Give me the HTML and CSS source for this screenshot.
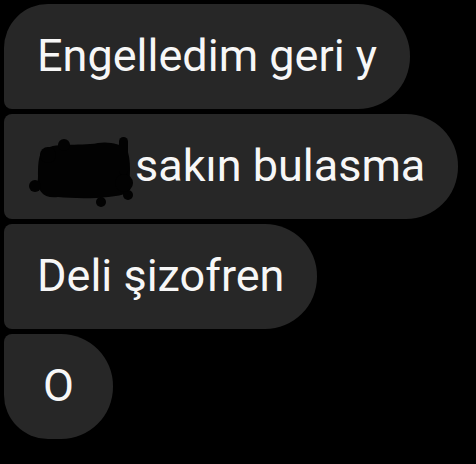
FILE: index.html
```html
<!DOCTYPE html>
<html>
<head>
<meta charset="utf-8">
<link rel="stylesheet" href="styles.css">
</head>
<body>
<div class="thread">
  <div class="bubble first"><span>Engelledim geri y</span></div>
  <div class="bubble middle">
    <svg class="scribble" width="106" height="76" viewBox="0 0 106 76" aria-hidden="true">
      <g fill="#020202">
        <path d="M14,18 C26,8 50,14 70,10 C82,8 92,12 98,14 C104,26 102,46 100,60 C84,66 50,66 30,64 C16,66 8,58 10,44 C10,34 10,24 14,18 Z"/>
        <circle cx="7" cy="53" r="6"/>
        <circle cx="36" cy="12" r="6"/>
        <rect x="91" y="4" width="9" height="38" rx="4.5"/>
        <circle cx="73" cy="69" r="5"/>
        <circle cx="100" cy="62" r="5"/>
        <circle cx="20" cy="22" r="8"/>
        <circle cx="96" cy="50" r="9"/>
      </g>
    </svg>
    <span>sakın bulasma</span>
  </div>
  <div class="bubble middle"><span>Deli şizofren</span></div>
  <div class="bubble last"><span>O</span></div>
</div>
</body>
</html>
```

FILE: styles.css
```css
html, body {
  margin: 0;
  padding: 0;
  background: #000;
}
.thread {
  display: flex;
  flex-direction: column;
  align-items: flex-start;
  gap: 5px;
  padding: 4px;
}
.bubble {
  box-sizing: border-box;
  height: 105px;
  min-width: 109px;
  padding: 0 33px;
  display: flex;
  align-items: center;
  justify-content: center;
  background: #272727;
  color: #f7f7f7;
  font-family: Roboto, "Noto Sans", sans-serif;
  font-size: 45px;
  line-height: 1;
  white-space: nowrap;
  border-radius: 8px 52px 52px 8px;
}
.bubble span {
  position: relative;
  top: -1px;
}
.bubble.first {
  border-top-left-radius: 44px;
}
.bubble.last {
  border-bottom-left-radius: 44px;
}
.scribble {
  display: block;
  flex: none;
  margin-left: -9px;
  margin-right: 1px;
  transform: translateY(4px);
}
```
